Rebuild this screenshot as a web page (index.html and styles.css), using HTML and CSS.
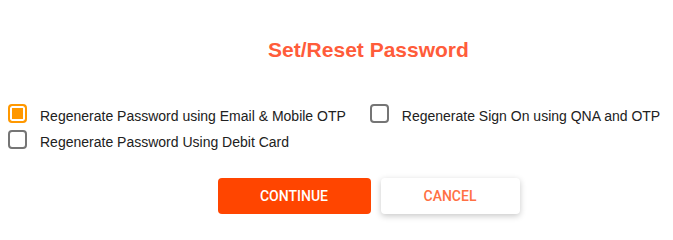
FILE: index.html
```html
<!DOCTYPE html>
<html>
<head>
<meta charset="utf-8">
<link rel="stylesheet" href="styles.css">
</head>
<body>
<div class="page">
  <h1 class="title">Set/Reset Password</h1>
  <div class="options">
    <label class="option">
      <span class="box checked"></span>
      <span class="label">Regenerate Password using Email &amp; Mobile OTP</span>
    </label>
    <label class="option">
      <span class="box"></span>
      <span class="label">Regenerate Sign On using QNA and OTP</span>
    </label>
    <label class="option">
      <span class="box"></span>
      <span class="label">Regenerate Password Using Debit Card</span>
    </label>
  </div>
  <div class="actions">
    <button class="btn primary">CONTINUE</button>
    <button class="btn secondary">CANCEL</button>
  </div>
</div>
</body>
</html>
```
FILE: styles.css
```css
html, body {
  margin: 0;
  padding: 0;
  background: #ffffff;
}
.page {
  width: 673px;
  height: 230px;
  box-sizing: border-box;
  padding: 38px 0 0 8px;
  font-family: "Liberation Sans", Arial, sans-serif;
}
.title {
  margin: 0 0 0 56px;
  text-align: center;
  font-size: 21px;
  font-weight: 700;
  color: #ff5c3a;
  line-height: 24px;
}
.options {
  margin-top: 42px;
  display: flex;
  flex-wrap: wrap;
  width: 665px;
  row-gap: 7px;
  column-gap: 24px;
}
.option {
  display: flex;
  align-items: center;
  height: 19px;
}
.box {
  width: 19px;
  height: 19px;
  box-sizing: border-box;
  border: 2px solid #757575;
  border-radius: 4px;
  margin-right: 13px;
  flex: none;
}
.box.checked {
  border-color: #ff9800;
  background: #ff9800;
  box-shadow: inset 0 0 0 2px #ffffff;
}
.label {
  font-size: 14px;
  line-height: 16px;
  padding-top: 5px;
  color: #212121;
}
.actions {
  margin-top: 29px;
  margin-left: 56px;
  display: flex;
  justify-content: center;
  gap: 10px;
}
.btn {
  height: 36px;
  border: none;
  border-radius: 4px;
  font-family: Roboto, "Liberation Sans", sans-serif;
  font-size: 14px;
  font-weight: 500;
  cursor: pointer;
}
.primary {
  width: 153px;
  background: #ff4500;
  color: #ffffff;
}
.secondary {
  width: 139px;
  background: #ffffff;
  color: #ff7043;
  box-shadow: 0 2px 6px rgba(0,0,0,0.22);
}
```
